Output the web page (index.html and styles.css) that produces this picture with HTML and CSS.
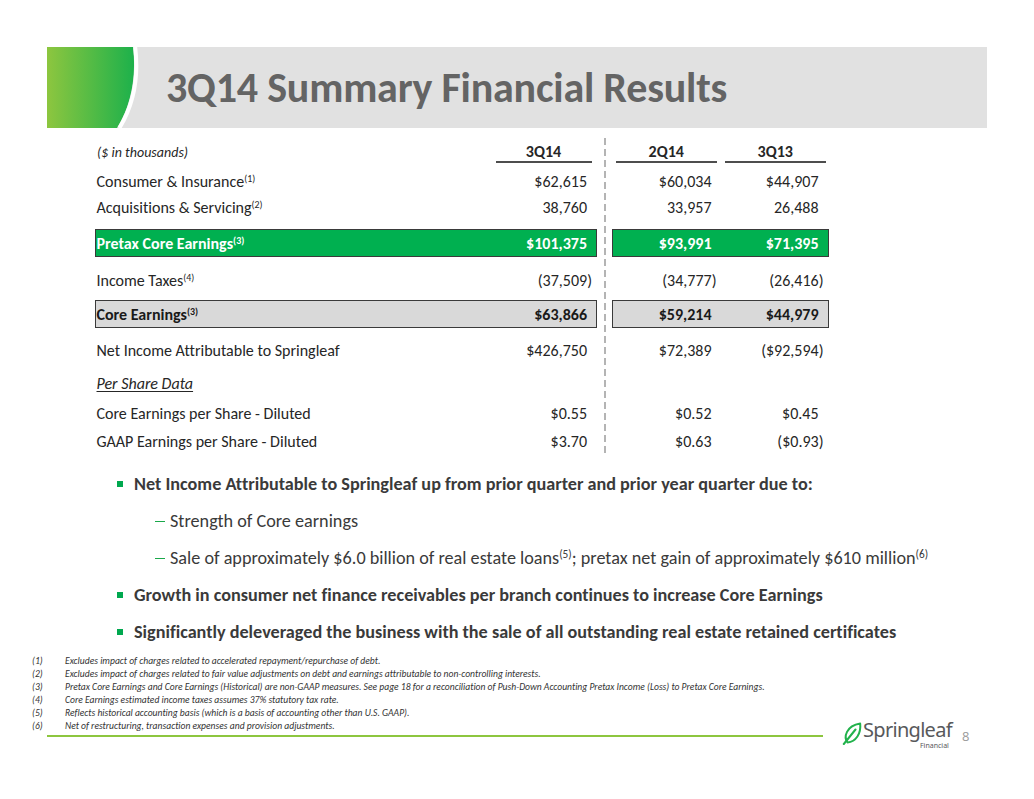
FILE: index.html
```html
<!DOCTYPE html>
<html lang="en">
<head>
<meta charset="utf-8">
<title>3Q14 Summary Financial Results</title>
<link rel="stylesheet" href="styles.css">
</head>
<body>
<div class="slide">
  <header class="header">
    <svg class="mark" width="96" height="81" viewBox="0 0 96 81" aria-hidden="true">
      <defs>
        <linearGradient id="markGrad" x1="0" y1="0" x2="1" y2="0">
          <stop offset="0" stop-color="#8dc63f"/>
          <stop offset="1" stop-color="#1db14b"/>
        </linearGradient>
      </defs>
      <path d="M0 0H86C89 25 86 55 70 81H0Z" fill="url(#markGrad)"/>
      <path d="M88.2 0C91.2 25 88.2 55 72.4 81" fill="none" stroke="#ffffff" stroke-width="4"/>
    </svg>
    <h1 class="title">3Q14 Summary Financial Results</h1>
  </header>

  <section class="fin">
    <div class="grp grp-left">
      <div class="row head"><span class="lbl units">($ in thousands)</span><span class="c1"><span class="hd">3Q14</span></span></div>
      <div class="row first"><span class="lbl">Consumer &amp; Insurance<sup>(1)</sup></span><span class="c1 pos">$62,615</span></div>
      <div class="row"><span class="lbl">Acquisitions &amp; Servicing<sup>(2)</sup></span><span class="c1 pos">38,760</span></div>
      <div class="row box box-green"><span class="lbl">Pretax Core Earnings<sup>(3)</sup></span><span class="c1 pos">$101,375</span></div>
      <div class="row after-box"><span class="lbl">Income Taxes<sup>(4)</sup></span><span class="c1">(37,509)</span></div>
      <div class="row box box-gray"><span class="lbl">Core Earnings<sup>(3)</sup></span><span class="c1 pos">$63,866</span></div>
      <div class="row after-core"><span class="lbl">Net Income Attributable to Springleaf</span><span class="c1 pos">$426,750</span></div>
      <div class="row per-share"><span class="lbl psd">Per Share Data</span><span class="c1"></span></div>
      <div class="row eps1"><span class="lbl">Core Earnings per Share - Diluted</span><span class="c1 pos">$0.55</span></div>
      <div class="row eps2"><span class="lbl">GAAP Earnings per Share - Diluted</span><span class="c1 pos">$3.70</span></div>
    </div>

    <div class="divider"></div>

    <div class="grp grp-right">
      <div class="row head"><span class="c2"><span class="hd">2Q14</span></span><span class="c3"><span class="hd">3Q13</span></span></div>
      <div class="row first"><span class="c2 pos">$60,034</span><span class="c3 pos">$44,907</span></div>
      <div class="row"><span class="c2 pos">33,957</span><span class="c3 pos">26,488</span></div>
      <div class="row box box-green"><span class="c2 pos">$93,991</span><span class="c3 pos">$71,395</span></div>
      <div class="row after-box"><span class="c2">(34,777)</span><span class="c3">(26,416)</span></div>
      <div class="row box box-gray"><span class="c2 pos">$59,214</span><span class="c3 pos">$44,979</span></div>
      <div class="row after-core"><span class="c2 pos">$72,389</span><span class="c3">($92,594)</span></div>
      <div class="row per-share"><span class="c2"></span><span class="c3"></span></div>
      <div class="row eps1"><span class="c2 pos">$0.52</span><span class="c3 pos">$0.45</span></div>
      <div class="row eps2"><span class="c2 pos">$0.63</span><span class="c3">($0.93)</span></div>
    </div>
  </section>

  <ul class="points">
    <li class="point"><span class="sq"></span><span class="txt">Net Income Attributable to Springleaf up from prior quarter and prior year quarter due to:</span></li>
    <li class="sub"><span class="dash"></span><span class="txt">Strength of Core earnings</span></li>
    <li class="sub"><span class="dash"></span><span class="txt">Sale of approximately $6.0 billion of real estate loans<sup>(5)</sup>; pretax net gain of approximately $610 million<sup>(6)</sup></span></li>
    <li class="point"><span class="sq"></span><span class="txt">Growth in consumer net finance receivables per branch continues to increase Core Earnings</span></li>
    <li class="point"><span class="sq"></span><span class="txt">Significantly deleveraged the business with the sale of all outstanding real estate retained certificates</span></li>
  </ul>

  <div class="bottom">
    <div class="notes-col">
      <ol class="notes">
        <li><span class="nn">(1)</span><span>Excludes impact of charges related to accelerated repayment/repurchase of debt.</span></li>
        <li><span class="nn">(2)</span><span>Excludes impact of charges related to fair value adjustments on debt and earnings attributable to non-controlling interests.</span></li>
        <li><span class="nn">(3)</span><span>Pretax Core Earnings and Core Earnings (Historical) are non-GAAP measures. See page 18 for a reconciliation of Push-Down Accounting Pretax Income (Loss) to Pretax Core Earnings.</span></li>
        <li><span class="nn">(4)</span><span>Core Earnings estimated income taxes assumes 37% statutory tax rate.</span></li>
        <li><span class="nn">(5)</span><span>Reflects historical accounting basis (which is a basis of accounting other than U.S. GAAP).</span></li>
        <li><span class="nn">(6)</span><span>Net of restructuring, transaction expenses and provision adjustments.</span></li>
      </ol>
      <div class="rule"></div>
    </div>
    <div class="brand">
      <svg class="leaf" width="20" height="23" viewBox="0 0 20 23" aria-hidden="true">
        <path d="M5.5 20.5C1.5 15 4 4 18.2 1.6C19.2 11.5 14 19.8 5.5 20.5Z" fill="none" stroke="#22b24c" stroke-width="2" stroke-linejoin="round"/>
        <path d="M1.8 22L13.5 7.5" fill="none" stroke="#22b24c" stroke-width="2" stroke-linecap="round"/>
      </svg>
      <div class="wordmark">
        <span class="wm-name">Springleaf</span>
        <span class="wm-sub">Financial</span>
      </div>
      <span class="page">8</span>
    </div>
  </div>
</div>
</body>
</html>
```

FILE: styles.css
```css
* { box-sizing: border-box; }

html, body {
  margin: 0;
  padding: 0;
  background: #ffffff;
}

body {
  font-family: Carlito, Calibri, Lato, "Open Sans", sans-serif;
  font-variant-ligatures: none;
  color: #262626;
}

.slide {
  width: 1034px;
  height: 799px;
  padding-top: 47px;
  overflow: hidden;
}

/* Header band */
.header {
  margin-left: 47px;
  width: 940px;
  height: 81px;
  background: #e1e1e1;
  display: flex;
  align-items: center;
}

.mark {
  display: block;
  flex: none;
}

.title {
  margin: 0 0 0 23px;
  font-size: 42px;
  font-weight: 700;
  color: #646464;
  letter-spacing: -0.2px;
  line-height: 1;
}

/* Financial table */
.fin {
  display: flex;
  margin-top: 15px;
  margin-left: 95px;
}

.grp {
  display: flex;
  flex-direction: column;
}

.grp-left { width: 502px; }
.grp-right { width: 217px; }

.divider {
  width: 2px;
  margin: -5px 6px -2px 7px;
  background: repeating-linear-gradient(to bottom, #b4b4b4 0 7px, transparent 7px 11px);
}

.row {
  display: flex;
  align-items: center;
  height: 26px;
  border: 1.5px solid transparent;
  font-size: 16px;
  white-space: nowrap;
}

.grp-left .row { padding-right: 4px; }

.row.head {
  height: 20px;
  align-items: flex-end;
  border: 0;
}
.grp-left .row.head { padding: 0 5.5px 0 1.5px; }
.grp-right .row.head { padding: 0 1.5px; }

.row.first { margin-top: 5px; }
.row.box { height: 28px; margin-top: 9px; border-color: #3a3a3a; font-weight: 700; }
.row.after-box { margin-top: 10px; }
.row.box-gray { margin-top: 7px; }
.row.after-core { margin-top: 9px; }
.row.per-share { margin-top: 7px; }
.row.eps1 { margin-top: 4px; }
.row.eps2 { margin-top: 2px; }

.box-green {
  background: #00b050;
  color: #ffffff;
}

.box-gray {
  background: #d9d9d9;
  color: #1a1a1a;
}

.lbl {
  flex: 1;
  padding-left: 0.5px;
}

.units {
  font-style: italic;
  font-size: 14px;
  padding-bottom: 2px;
}

.psd {
  font-style: italic;
  text-decoration: underline;
  text-underline-offset: 2px;
}

.c1, .c2, .c3 {
  text-align: right;
}

.c1 { width: 96px; }
.c2 { width: 105.5px; padding-right: 2px; }
.c3 { flex: 1; padding-right: 4.5px; }

.c1.pos { padding-right: 5px; }
.c2.pos { padding-right: 7px; }
.c3.pos { padding-right: 9.5px; }

.head .c1, .head .c2, .head .c3 {
  padding-right: 0;
  display: flex;
}

.hd {
  display: block;
  flex: 1;
  text-align: center;
  font-weight: 700;
  line-height: 18px;
  border-bottom: 2px solid #4d4d4d;
}

.head .c2 .hd { margin: 0 2px 0 2px; }
.head .c3 .hd { margin: 0 2px 0 6px; }

sup {
  font-size: 0.62em;
  line-height: 0;
  vertical-align: 0.55em;
}

/* Bullet points */
.points {
  list-style: none;
  margin: 11px 0 0 0;
  padding: 0 0 0 117px;
  color: #3a3a3a;
  font-size: 18.2px;
}

.points li {
  display: flex;
  align-items: center;
  height: 37px;
  white-space: nowrap;
}

.point { font-weight: 700; }

.sq {
  width: 6px;
  height: 6px;
  background: #00a84f;
  margin-right: 11px;
  flex: none;
}

.sub { padding-left: 38px; }

.dash {
  width: 10px;
  height: 1.8px;
  margin: 2px 5px 0 0;
  background: #1aa84a;
  flex: none;
}

/* Bottom: notes + brand */
.bottom {
  display: flex;
  margin-top: 4px;
}

.notes-col {
  width: 791px;
  margin-left: 32px;
}

.notes {
  list-style: none;
  margin: 0;
  padding: 0;
  font-size: 9.6px;
  font-style: italic;
  color: #333333;
}

.notes li {
  display: flex;
  align-items: center;
  height: 13px;
  white-space: nowrap;
}

.nn {
  width: 33px;
  flex: none;
}

.rule {
  margin: 3px 0 0 15px;
  height: 1.5px;
  background: #8dc63f;
}

.brand {
  display: flex;
  align-items: flex-start;
  margin: 66px 0 0 19px;
}

.leaf {
  display: block;
  flex: none;
  margin-top: 2px;
}

.wordmark {
  display: flex;
  flex-direction: column;
  align-items: flex-end;
  margin-left: 1px;
}

.wm-name {
  font-family: "Noto Sans", "Open Sans", sans-serif;
  font-size: 20px;
  line-height: 19px;
  color: #58595b;
  letter-spacing: -0.7px;
}

.wm-sub {
  font-family: "Noto Sans", sans-serif;
  font-size: 7px;
  line-height: 8px;
  margin-top: 3px;
  color: #58595b;
  margin-right: 3px;
}

.page {
  margin: 9px 0 0 10px;
  font-family: "Open Sans", sans-serif;
  font-size: 13px;
  line-height: 14px;
  color: #9a9a9a;
}
```
